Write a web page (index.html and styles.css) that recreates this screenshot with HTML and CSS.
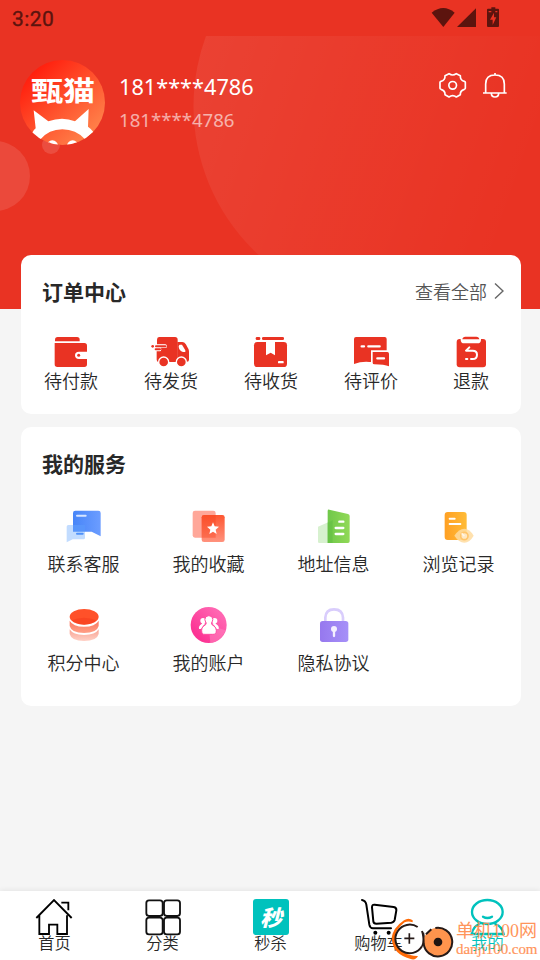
FILE: index.html
```html
<!DOCTYPE html>
<html lang="zh-CN">
<head>
<meta charset="utf-8">
<title>我的</title>
<link rel="stylesheet" href="styles.css">
</head>
<body>
<div class="screen">
  <header class="hero">
    <svg class="hero-bg" width="540" height="273" viewBox="0 36 540 273">
      <defs><linearGradient id="hg" x1="0" y1="0.3" x2="1" y2="0.65"><stop offset="0" stop-color="#fff" stop-opacity=".075"/><stop offset=".85" stop-color="#fff" stop-opacity="0"/></linearGradient></defs>
      <circle cx="396.5" cy="106" r="203" fill="url(#hg)"/>
      <circle cx="-5" cy="176" r="35" fill="#fff" fill-opacity=".11"/>
      <circle cx="51" cy="145" r="9" fill="#fff" fill-opacity=".13"/>
    </svg>
    <div class="status">
      <span>3:20</span>
      <svg width="68" height="20" viewBox="0 0 204 60" fill="#5c140e">
        <path d="M-1 14Q34-14 68 14L34 57Z"/><path d="M132 1V57H75Z"/>
        <path d="M178-2h12v4h8q3 0 3 3v49q0 3-3 3h-30q-3 0-3-3V5q0-3 3-3h10Z"/><path d="M186 14L174 35h8v16l11-23h-7ZM170 9h8v4h-8Zm20 0h6v4h-6Z" fill="#e93323"/>
      </svg>
    </div>
    <div class="profile">
      <div class="avatar">
        <svg width="85" height="85" viewBox="0 0 255 255">
          <defs><linearGradient id="av" x1=".15" y1=".1" x2=".85" y2=".85"><stop stop-color="#ff1c0c"/><stop offset="1" stop-color="#ff8049"/></linearGradient><clipPath id="ac"><circle cx="127.5" cy="127.5" r="127.5"/></clipPath></defs>
          <g clip-path="url(#ac)"><rect width="255" height="255" fill="url(#av)"/>
          <g fill="#fff"><path d="M41 151L85 184Q127 168 165 184L206 147L204 200Q213 206 220 216L195 238Q168 208 127 208Q87 208 60 239L36 220Q40 210 47 205Z"/><ellipse cx="97" cy="257" rx="17" ry="16"/><ellipse cx="158" cy="257" rx="17" ry="16"/></g>
          <circle cx="85" cy="256" r="9" fill="#ff5a38"/><circle cx="168" cy="257" r="8" fill="#ff7744"/></g>
        </svg>
        <span class="avatar-text">甄猫</span>
      </div>
      <div class="who"><div class="name">181****4786</div><div class="phone">181****4786</div></div>
      <svg class="tools" width="68" height="28" viewBox="0 0 204 84" fill="none" stroke="#fff" stroke-width="5" stroke-linejoin="round">
        <path d="M27 11Q38 19 49 11L61 17Q60 31 73 34Q76 35 76 37V55Q76 57 73 58Q60 62 61 74L49 81Q38 73 27 81L15 74Q16 62 3 58Q0 57 0 55V37Q0 35 3 34Q16 31 15 17Z"/><circle cx="38" cy="46" r="11.500"/>
        <path d="M137 68V42Q137 15 165 15Q193 15 193 42V68M129 69H200M165 9V15M154 70Q154 81 165 81Q176 81 176 70"/>
      </svg>
    </div>
  </header>

  <main class="content">
    <section class="card orders">
      <div class="card-head"><h2>订单中心</h2><a class="more">查看全部<svg width="10" height="18" viewBox="0 0 10 18" fill="none" stroke="#666" stroke-width="1.400"><path d="M1 1.500L9 9L1 16.500"/></svg></a></div>
      <div class="grid five">
        <div class="item"><svg class="ico" viewBox="0 0 108 108" fill="#e93323"><path d="M6 22V17Q6 9 14 9H72Q80 9 80 17V22Z"/><path d="M5 27H94Q102 27 102 35V53H78Q66 53 66 64Q66 75 78 75H102V91Q102 99 94 99H13Q5 99 5 91Z"/><circle cx="77" cy="64" r="4.500"/></svg><span>待付款</span></div>
        <div class="item"><svg class="ico" viewBox="0 0 108 108" fill="#e93323"><path d="M18 9H66Q74 9 74 17V84H18Q11 84 11 77V52H22Q28 45 22 40H38Q42 37 38 31H12V17Q12 9 18 9Z"/><path d="M73 24H88Q94 24 98 30L106 44Q108 48 108 53V77Q108 83 102 83H73Z"/><path d="M80 32H87L97 49V54H90Q78 50 77 38Q77 33 80 32Z" fill="#fff"/><path d="M-5 32H41V41H24V51H0V43H-5Z" fill="#fff"/><path d="M9 37H37M8 46H21" stroke="#e93323" stroke-width="6" stroke-linecap="round"/><circle cx="-1" cy="37" r="4"/><g stroke="#fff" stroke-width="4"><circle cx="32" cy="84" r="15"/><circle cx="85" cy="84" r="15"/></g></svg><span>待发货</span></div>
        <div class="item"><svg class="ico" viewBox="0 0 108 108" fill="#e93323"><rect x="8" y="9" width="14" height="9" rx="4"/><rect x="27" y="9" width="66" height="9" rx="4"/><rect x="3" y="24" width="99" height="75" rx="10"/><path d="M39 24H66V64L53 56L39 64Z" fill="#fff"/><rect x="75" y="81" width="17" height="7" rx="2" fill="#fff"/></svg><span>待收货</span></div>
        <div class="item"><svg class="ico" viewBox="0 0 108 108" fill="#e93323"><path d="M3 90V15Q3 9 9 9H95Q101 9 101 15V84H49Q25 82 3 90Z"/><path d="M54 49H109V100H86L54 91Z" fill="#fff"/><path d="M60 54H103Q108 54 108 59V97Q94 91 64 91Q59 91 59 86V54Z"/><path d="M26 37H33M46 37H80M73 73H93" stroke="#fff" stroke-width="7" stroke-linecap="round"/></svg><span>待评价</span></div>
        <div class="item"><svg class="ico" viewBox="0 0 108 108" fill="#e93323"><rect x="11" y="15" width="88" height="85" rx="9"/><path d="M23 13H84V17Q84 28 73 28H34Q23 28 23 17Z" fill="#fff"/><path d="M28 16Q29 8 37 8H70Q78 8 79 16Z"/><path d="M49 40L39 50H59Q72 50 72 62Q72 75 59 75H54M43 75H39" fill="none" stroke="#fff" stroke-width="6" stroke-linecap="round" stroke-linejoin="round"/></svg><span>退款</span></div>
      </div>
    </section>

    <section class="card services">
      <div class="card-head"><h2>我的服务</h2></div>
      <div class="grid four">
        <div class="item"><svg class="ico" viewBox="0 0 108 108"><defs><linearGradient id="b"><stop stop-color="#4785f8"/><stop offset="1" stop-color="#6c9dff"/></linearGradient></defs><path d="M31 8H100Q107 8 107 15V85L80 71H24V15Q24 8 31 8Z" fill="url(#b)"/><path d="M10 51H60V90Q60 94 55 94H23L5 103V56Q5 51 10 51Z" fill="#add0ff" fill-opacity=".75"/><path d="M24 51H60V71H24Z" fill="#4387f9" fill-opacity=".75"/><path d="M36 23H62" stroke="#d6e5ff" stroke-width="6" stroke-linecap="round"/><path d="M36 77H53" stroke="#4f91fa" stroke-width="6" stroke-linecap="round"/></svg><span>联系客服</span></div>
        <div class="item"><svg class="ico" viewBox="0 0 108 108"><defs><linearGradient id="r" x2="0" y2="1"><stop stop-color="#fe5631"/><stop offset="1" stop-color="#ff927d"/></linearGradient></defs><rect x="8" y="8" width="69" height="81" rx="7" fill="#ffa799"/><rect x="35" y="21" width="69" height="81" rx="7" fill="url(#r)"/><path d="M35 28Q35 21 42 21H77V89H35Z" fill="#f7431f" fill-opacity=".4"/><path d="M69 43L74 55L87 56L77 65L80 78L69 71L58 78L61 65L51 56L64 55Z" fill="#fff"/></svg><span>我的收藏</span></div>
        <div class="item"><svg class="ico" viewBox="0 0 108 108"><defs><linearGradient id="g"><stop stop-color="#70c84a"/><stop offset="1" stop-color="#91d957"/></linearGradient></defs><path d="M9 56L53 37V105H13Q9 105 9 101Z" fill="#d7f1cf"/><path d="M38 9Q38 4 43 5L99 18Q104 19 104 24V100Q104 105 99 105H38Z" fill="url(#g)"/><path d="M38 44L53 37V105H38Z" fill="#60bd43" fill-opacity=".55"/><path d="M73 41H85M62 60H85M62 78H85" stroke="#fff" stroke-width="7" stroke-linecap="round"/></svg><span>地址信息</span></div>
        <div class="item"><svg class="ico" viewBox="0 0 108 108"><defs><linearGradient id="o"><stop stop-color="#ffa023"/><stop offset="1" stop-color="#ffbc38"/></linearGradient></defs><rect x="14" y="12" width="66" height="84" rx="9" fill="url(#o)"/><path d="M29 32H44M29 48H61" stroke="#fff" stroke-width="6" stroke-linecap="round"/><path d="M43 83Q57 62 73 62Q89 62 101 83Q89 104 73 104Q57 104 43 83Z" fill="#ffdca0" fill-opacity=".85"/><circle cx="73" cy="84" r="11" fill="#ffe8c2" stroke="#ffc56a" stroke-width="5"/><path d="M73 84L65 76" stroke="#fff5e5" stroke-width="5"/></svg><span>浏览记录</span></div>
        <div class="item"><svg class="ico" viewBox="0 0 108 108"><defs><linearGradient id="c2" x2="0" y2="1"><stop stop-color="#fb775f"/><stop offset="1" stop-color="#ff9f86"/></linearGradient><linearGradient id="c3" x2="0" y2="1"><stop stop-color="#f8a494"/><stop offset="1" stop-color="#ffd0c5"/></linearGradient></defs><g transform="translate(2 0)"><path d="M12 67Q22 84 55 84Q89 84 99 67V81Q94 102 55 102Q17 102 12 81Z" fill="url(#c3)"/><path d="M12 41Q22 59 55 59Q89 59 99 41V57Q94 78 55 78Q17 78 12 57Z" fill="url(#c2)"/><ellipse cx="55.500" cy="29.500" rx="43.500" ry="23.500" fill="#ff5129"/><path d="M18 40Q55 25 92 40Q82 53 55 53Q28 53 18 40Z" fill="#f63a1b" fill-opacity=".5"/></g></svg><span>积分中心</span></div>
        <div class="item"><svg class="ico" viewBox="0 0 108 108"><defs><linearGradient id="p" x1=".2" y1=".8" x2=".8" y2=".2"><stop stop-color="#fc3494"/><stop offset="1" stop-color="#ff65b1"/></linearGradient></defs><g transform="translate(2 0)"><circle cx="54" cy="54" r="54" fill="url(#p)"/><path d="M54 54L105 70Q91 105 59 108Z" fill="#ff83bf" fill-opacity=".55"/><g fill="#fff"><circle cx="37" cy="41" r="8"/><circle cx="72" cy="41" r="8"/><path d="M35 46Q36 51 28 55Q23 60 25 66Q29 67 32 65Q38 53 44 50ZM74 46Q73 51 81 55Q86 60 84 66Q80 67 77 65Q71 53 65 50Z"/><g stroke="#ff4ba1" stroke-width="3"><path d="M48 48Q47 53 39 57Q32 62 33 71Q33 83 43 82H66Q77 83 77 71Q77 62 70 57Q62 53 61 48Z"/><circle cx="54.500" cy="38" r="12"/></g><path d="M48 44H61V54H48Z"/></g></g></svg><span>我的账户</span></div>
        <div class="item"><svg class="ico" viewBox="0 0 108 108"><defs><linearGradient id="l"><stop stop-color="#9678ee"/><stop offset="1" stop-color="#a690f8"/></linearGradient></defs><g transform="translate(2 0)"><path d="M29 46V32Q30 7 55 7Q81 7 82 32V46" fill="none" stroke="#d9cdfc" stroke-width="8"/><rect x="13" y="42" width="85" height="63" rx="8" fill="url(#l)"/><circle cx="55" cy="66" r="9" fill="#f4efff"/><path d="M55 66V87" stroke="#f4efff" stroke-width="7" stroke-linecap="round"/></g></svg><span>隐私协议</span></div>
      </div>
    </section>
  </main>

  <nav class="tabs">
    <div class="tab"><svg class="ico" viewBox="0 0 108 108" fill="none" stroke="#000" stroke-width="5.500"><path d="M1 57L54 3L107 57M76 11H97V34M10 49V105H39V77H64V105H93V49"/></svg><span>首页</span></div>
    <div class="tab"><svg class="ico" viewBox="0 0 108 108" fill="none" stroke="#111" stroke-width="5.500"><rect x="7" y="4" width="49" height="47" rx="8"/><rect x="60" y="4" width="48" height="47" rx="8"/><rect x="7" y="56" width="49" height="50" rx="8"/><rect x="60" y="56" width="48" height="50" rx="8"/></svg><span>分类</span></div>
    <div class="tab"><div class="sec">秒</div><span>秒杀</span></div>
    <div class="tab"><svg class="ico" viewBox="0 0 108 108" fill="none" stroke="#000" stroke-width="6" stroke-linecap="round" stroke-linejoin="round"><path d="M6 3Q17 5 19 17L28 77Q30 88 39 88H93M44 17L101 24Q110 26 109 34L104 63Q102 70 94 71L49 74Q41 74 40 67L36 25Q36 16 44 17Z"/><g fill="#000" stroke="none"><circle cx="46" cy="101" r="6"/><circle cx="86" cy="101" r="6"/></g></svg><span>购物车</span></div>
    <div class="tab active"><svg class="ico" viewBox="0 0 108 108" fill="none" stroke="#00c2bd" stroke-width="7" stroke-linecap="round"><ellipse cx="58" cy="39" rx="46" ry="36"/><path d="M45 53Q58 61 72 53M34 75Q15 83 11 105H107Q103 83 82 75"/></svg><span>我的</span></div>
  </nav>

  <div class="mark">
    <svg width="64" height="45" viewBox="0 0 192 135" fill="none">
      <path d="M68 16Q56 6 42 16Q2 43 6 78Q12 119 60 131Q76 138 84 123Q36 124 16 82Q9 48 44 22Q54 17 68 22Z" fill="#ff6b08"/>
      <path d="M83 36A43 43 0 1 0 96 94" stroke="#261a18" stroke-width="6"/><path d="M96 94Q105 74 100 53M58 55V86M43 70H73" stroke="#261a18" stroke-width="5"/>
      <circle cx="144" cy="81" r="43" fill="#ff944d"/><path d="M136 39A43 43 0 1 1 101 86Q101 62 96 48M108 58L124 43" stroke="#261a18" stroke-width="6"/><circle cx="144" cy="81" r="13" fill="#201512"/>
    </svg>
    <div class="mark-text"><b>单机100网</b><i>danji100.com</i></div>
  </div>
</div>
</body>
</html>
```

FILE: styles.css
```css
* { box-sizing: border-box; }
body { margin: 0; font-family: "Noto Sans", "Noto Sans CJK SC", sans-serif; color: #282828; }
.screen { position: relative; width: 540px; height: 960px; overflow: hidden; background: #f5f5f5; display: flex; flex-direction: column; }
.ico { width: 36px; height: 36px; display: block; overflow: visible; flex: none; }

.hero { position: relative; height: 309px; flex: none; background: #e93323; }
.hero-bg { position: absolute; left: 0; top: 36px; }
.status { position: relative; height: 36px; display: flex; justify-content: space-between; padding: 8px 40px 0 12px; font: 400 21px/22px Roboto, sans-serif; letter-spacing: .4px; color: #5c140e; -webkit-text-stroke: .35px #5c140e; }
.status svg { overflow: visible; }
.profile { position: relative; display: flex; padding: 24px 32px 0 20px; }
.avatar { position: relative; width: 85px; height: 85px; }
.avatar-text { position: absolute; left: 11px; top: 13px; font: 700 32px/32px "Noto Sans CJK SC", sans-serif; color: #fff; white-space: nowrap; transform: scaleY(.86); }
.who { margin-left: 14px; flex: 1; color: #fff; }
.name { font-size: 21.700px; line-height: 30px; margin-top: 12px; }
.phone { font-size: 18.600px; line-height: 26px; margin-top: 5px; opacity: .6; }
.tools { margin-top: 10px; overflow: visible; }

.content { position: relative; margin-top: -54px; padding: 0 19px 0 21px; flex: 1; font-family: "Noto Sans CJK SC", sans-serif; font-weight: 350; }
.card { background: #fff; border-radius: 10px; }
.orders { height: 159px; margin-bottom: 13px; }
.services { height: 279px; }
.card-head { display: flex; justify-content: space-between; align-items: center; height: 72px; padding: 0 17px 0 21px; }
h2 { margin: 0; font-size: 21px; line-height: 30px; font-weight: 700; }
.more { display: flex; align-items: center; gap: 7px; font-size: 18px; line-height: 26px; color: #555; }
.grid { display: grid; }
.five { grid-template-columns: repeat(5, 1fr); padding-top: 7px; }
.four { grid-template-columns: repeat(4, 1fr); padding-top: 9px; row-gap: 30px; }
.item { display: flex; flex-direction: column; align-items: center; font-size: 18px; line-height: 22px; }
.item .ico { position: relative; }
.five .item span { line-height: 22px; margin-top: -1px; }
.four .item { height: 69px; }
.four .ico { left: -.5px; }
.four .item span { margin-top: 8px; }

.tabs { position: relative; height: 69px; flex: none; background: #fff; display: grid; grid-template-columns: repeat(5, 1fr); padding-top: 8px; font: 350 16.200px/16px "Noto Sans CJK SC", sans-serif; box-shadow: 0 -1px 5px rgba(0,0,0,.07); }
.tab { display: flex; flex-direction: column; align-items: center; }
.tab span { margin: -1px 0 0 1px; }
.active { color: #00c2bd; }
.active span { margin-left: 3px; }
.sec { width: 36px; height: 36px; margin-left: 2px; border-radius: 3px; background: #00c2bd; color: #fff; font: italic 900 22px/35px "Noto Sans CJK SC", sans-serif; text-align: center; }

.mark { position: absolute; left: 390px; top: 915px; display: flex; }
.mark-text { display: flex; flex-direction: column; margin-left: 2px; color: #ff8a4a; white-space: nowrap; opacity: .9; }
.mark-text b { font: 400 18px/32px "Liberation Serif", "Noto Sans CJK SC", serif; }
.mark-text i { font: normal 15px/15px "Liberation Serif", serif; margin-top: -5px; letter-spacing: -.05px; -webkit-text-stroke: .2px #ff8a4a; }
```
